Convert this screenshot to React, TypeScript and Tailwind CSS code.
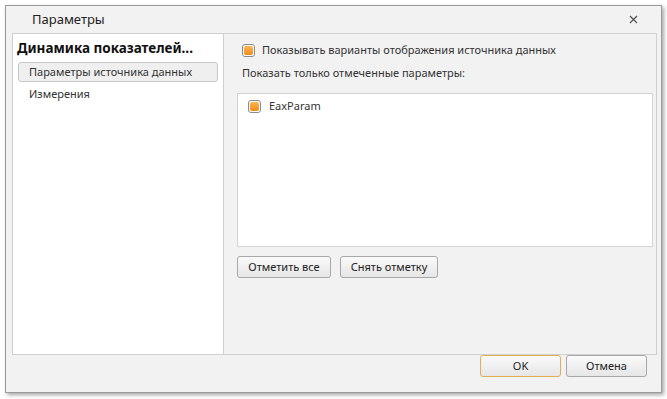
import React from "react";

const font = { fontFamily: '"Noto Sans", "Open Sans", sans-serif' };

function Check() {
  return (
    <span className="inline-flex h-[13px] w-[13px] shrink-0 items-center justify-center rounded-[3px] border border-[#8a8a8a] bg-white">
      <span className="h-[9px] w-[9px] rounded-[2px] bg-gradient-to-b from-[#ffb64d] to-[#f08a10]" />
    </span>
  );
}

function Btn({ children, className = "" }: { children: React.ReactNode; className?: string }) {
  return (
    <button
      className={
        "flex h-[22px] items-center justify-center rounded-[3px] border bg-gradient-to-b from-[#fafafa] to-[#e6e6e6] text-[11px] text-[#222] " +
        className
      }
    >
      {children}
    </button>
  );
}

export default function App() {
  return (
    <div className="h-[399px] w-[667px] bg-white pl-[5px] pt-[5px]" style={font}>
      <div className="flex h-[388px] w-[657px] flex-col border border-[#9a9a9a] bg-[#f2f2f2] shadow-[2px_2px_4px_rgba(0,0,0,0.35)]">
        <div className="flex h-[27px] shrink-0 items-center justify-between pl-[26px] pr-[23px]">
          <span className="text-[13px] text-[#222]">Параметры</span>
          <svg width="9" height="9" viewBox="0 0 9 9">
            <path d="M1 1L8 8M8 1L1 8" stroke="#555" strokeWidth="1.3" />
          </svg>
        </div>
        <div className="ml-[6px] mr-[4px] flex h-[322px] shrink-0 border border-[#d0d0d0]">
          <div className="w-[211px] shrink-0 border-r border-[#d0d0d0] bg-white px-[4px] pt-[5px]">
            <div className="text-[13.5px] font-bold leading-[18px] text-[#111]">Динамика показателей...</div>
            <div className="mt-[5px] ml-[1px] mr-[1px] flex h-[20px] items-center rounded-[3px] border border-[#c6c6c6] bg-[#efefef] pl-[10px] text-[11px] text-[#333]">
              Параметры источника данных
            </div>
            <div className="mt-[2px] flex h-[20px] items-center pl-[12px] text-[11px] text-[#333]">Измерения</div>
          </div>
          <div className="flex min-w-0 flex-1 flex-col pl-[13px] pr-[3px] pt-[7px] text-[11px] text-[#333]">
            <div className="flex h-[18px] items-center gap-[7px] pl-[5px]">
              <Check />
              <span>Показывать варианты отображения источника данных</span>
            </div>
            <div className="mt-[6px] flex h-[16px] items-center pl-[5px]">Показать только отмеченные параметры:</div>
            <div className="mt-[12px] h-[154px] border border-[#d4d4d4] bg-white pl-[10px] pt-[4px]">
              <div className="flex h-[16px] items-center gap-[8px]">
                <Check />
                <span>EaxParam</span>
              </div>
            </div>
            <div className="mt-[9px] flex gap-[9px]">
              <Btn className="w-[94px] border-[#a8a8a8]">Отметить все</Btn>
              <Btn className="w-[98px] border-[#a8a8a8]">Снять отметку</Btn>
            </div>
          </div>
        </div>
        <div className="flex justify-end gap-[5px] pr-[14px]">
          <Btn className="w-[81px] border-[#e0b050]">OK</Btn>
          <Btn className="w-[81px] border-[#a8a8a8]">Отмена</Btn>
        </div>
      </div>
    </div>
  );
}
